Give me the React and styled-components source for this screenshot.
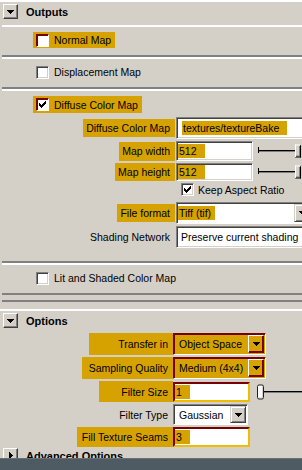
import React from 'react';
import styled, { createGlobalStyle } from 'styled-components';

const C = {
  bg: '#d4d0c8',
  white: '#ffffff',
  shadow: '#808080',
  dark: '#404040',
  hl: '#d6a200',
  maroon: '#780000',
  gold: '#f0bc00',
  task: '#4f5b63',
};

const Global = createGlobalStyle`
  html, body { margin: 0; padding: 0; background: ${C.bg}; overflow: hidden; }
  body { font-family: "Liberation Sans", Arial, sans-serif; font-size: 10.5px; color: #000; }
`;

const Screen = styled.div`
  width: 302px;
  height: 470px;
  display: flex;
  flex-direction: column;
  overflow: hidden;
  background: ${C.bg};
`;

const Viewport = styled.div`
  height: 458px;
  flex-shrink: 0;
  overflow: hidden;
  display: flex;
  flex-direction: column;
`;

const Taskbar = styled.div`
  height: 12px;
  flex-shrink: 0;
  box-sizing: border-box;
  background: ${C.task};
  border-top: 1px solid #66727a;
`;

const Section = styled.section`
  flex-shrink: 0;
  margin-top: ${p => p.$mt || 0}px;
  border-top: ${p => (p.$top ? `2px solid ${C.white}` : 'none')};
`;

const Header = styled.div`
  height: ${p => p.$h}px;
  display: flex;
  align-items: center;
  gap: 8px;
  padding-left: 3px;
`;

const Toggle = styled.span`
  width: 15px;
  height: 15px;
  box-sizing: border-box;
  display: inline-flex;
  align-items: center;
  justify-content: center;
  background: ${C.bg};
  border: 1px solid;
  border-color: ${C.white} ${C.dark} ${C.dark} ${C.white};
  box-shadow: inset -1px -1px 0 ${C.shadow};
`;

const Title = styled.span`
  font-weight: bold;
  font-size: 11px;
  white-space: nowrap;
`;

const Body = styled.div`
  padding-top: ${p => p.$pt}px;
  ${p =>
    p.$framed &&
    `
    margin-left: 2px;
    padding-bottom: 5px;
    border-bottom: 2px solid ${C.shadow};
  `}
`;

const Frame = styled.div`
  border-top: 2px solid ${C.white};
  border-bottom: 2px solid ${C.shadow};
`;

const CheckFrame = styled(Frame)`
  height: 26px;
  padding: 0 0 2px 31px;
  display: flex;
  align-items: center;
`;

const DiffuseFrame = styled(Frame)`
  padding: 5px 0 13px;
  display: flex;
  flex-direction: column;
`;

const CheckLine = styled.div`
  padding-left: 31px;
  display: flex;
`;

const CheckItem = styled.label`
  display: inline-flex;
  align-items: center;
  gap: 5px;
  height: ${p => p.$h || 16}px;
  padding: 0 4px 0 3px;
  background: ${p => (p.$hl ? C.hl : 'transparent')};
  white-space: nowrap;
`;

const Box = styled.span`
  width: 13px;
  height: 13px;
  flex-shrink: 0;
  box-sizing: border-box;
  display: inline-flex;
  align-items: center;
  justify-content: center;
  background: ${C.white};
  border: 1px solid;
  border-color: ${p =>
    p.$hl
      ? `${C.maroon} ${C.white} ${C.white} ${C.maroon}`
      : `${C.shadow} ${C.white} ${C.white} ${C.shadow}`};
  box-shadow: inset 1px 1px 0 ${p => (p.$hl ? C.maroon : C.dark)},
    inset -1px -1px 0 ${p => (p.$hl ? C.white : C.bg)};
`;

const CHECK = [
  [[6, 1]],
  [[5, 2]],
  [[0, 1], [4, 3]],
  [[0, 2], [3, 3]],
  [[0, 5]],
  [[1, 3]],
  [[2, 1]],
];

const Checkbox = ({ hl, checked }) => (
  <Box $hl={hl}>
    {checked && (
      <svg width="7" height="7" viewBox="0 0 7 7" shapeRendering="crispEdges">
        {CHECK.flatMap((segs, y) =>
          segs.map(([x, w]) => <rect key={`${y}-${x}`} x={x} y={y} width={w} height={1} fill="#000" />)
        )}
      </svg>
    )}
  </Box>
);

const Arrow = ({ dir = 'down' }) =>
  dir === 'down' ? (
    <svg width="7" height="4" viewBox="0 0 7 4" shapeRendering="crispEdges">
      <path d="M0 0h7v1h-1v1h-1v1h-1v1h-1v-1h-1v-1h-1v-1h-1z" fill="#000" />
    </svg>
  ) : (
    <svg width="4" height="7" viewBox="0 0 4 7" shapeRendering="crispEdges">
      <path d="M0 0v7h1v-1h1v-1h1v-1h1v-1h-1v-1h-1v-1h-1v-1z" fill="#000" />
    </svg>
  );

const Form = styled.div`
  --label-col: ${p => p.$col}px;
  --col-gap: ${p => p.$gap}px;
  display: flex;
  flex-direction: column;
  gap: 2px;
  margin-top: ${p => p.$mt || 0}px;
`;

const FormRow = styled.div`
  display: grid;
  grid-template-columns: var(--label-col) minmax(0, 1fr);
  column-gap: var(--col-gap);
  height: ${p => p.$h}px;
  align-items: ${p => (p.$top ? 'start' : 'center')};
`;

const Label = styled.span`
  justify-self: end;
  display: flex;
  align-items: center;
  justify-content: flex-end;
  box-sizing: border-box;
  height: ${p => p.$h || 18}px;
  ${p => (p.$w ? `width: ${p.$w}px;` : '')}
  padding: 0 5px 0 3px;
  background: ${p => (p.$hl ? C.hl : 'transparent')};
  white-space: nowrap;
`;

const Cell = styled.div`
  display: flex;
  align-items: center;
  height: ${p => (p.$h ? `${p.$h}px` : '100%')};
  padding-left: ${p => p.$pl || 0}px;
  gap: ${p => p.$gap || 0}px;
  white-space: nowrap;
`;

const TextField = styled.div`
  width: ${p => p.$w}px;
  height: ${p => p.$h}px;
  flex-shrink: 0;
  box-sizing: border-box;
  display: flex;
  align-items: center;
  padding-left: ${p => p.$pl || 0}px;
  background: ${C.white};
  overflow: hidden;
  white-space: nowrap;
  border: ${p => (p.$hl ? 2 : 1)}px solid;
  border-color: ${p =>
    p.$hl
      ? `${C.maroon} ${C.gold} ${C.gold} ${C.maroon}`
      : `${C.shadow} ${C.white} ${C.white} ${C.shadow}`};
  box-shadow: ${p => (p.$hl ? 'none' : `inset 1px 1px 0 ${C.dark}, inset -1px -1px 0 ${C.bg}`)};
`;

const Sel = styled.span`
  display: inline-flex;
  align-items: center;
  height: 14px;
  padding: 0 ${p => p.$pr ?? 8}px 0 1px;
  background: ${C.hl};
`;

const OptionMenu = styled.div`
  width: ${p => p.$w}px;
  height: ${p => p.$h || 22}px;
  flex-shrink: 0;
  box-sizing: border-box;
  display: flex;
  padding: 1px;
  border: 1px solid;
  border-color: ${p =>
    p.$hl
      ? `${C.maroon} ${C.white} ${C.white} ${C.maroon}`
      : `${C.shadow} ${C.white} ${C.white} ${C.shadow}`};
  box-shadow: inset 1px 1px 0 ${p => (p.$hl ? C.maroon : C.dark)};
  background: ${p => (p.$hl ? C.hl : C.white)};
`;

const MenuValue = styled.div`
  flex: 1;
  min-width: 0;
  display: flex;
  align-items: center;
  padding-left: ${p => p.$pl || 0}px;
  white-space: nowrap;
  overflow: hidden;
`;

const MenuButton = styled.div`
  width: 16px;
  flex-shrink: 0;
  box-sizing: border-box;
  display: flex;
  align-items: center;
  justify-content: center;
  border: 1px solid;
  border-color: ${p =>
    p.$hl
      ? `${C.white} ${C.maroon} ${C.maroon} ${C.white}`
      : `${C.bg} ${C.dark} ${C.dark} ${C.bg}`};
  box-shadow: ${p =>
    p.$hl ? `inset -1px -1px 0 ${C.maroon}` : `inset 1px 1px 0 ${C.white}, inset -1px -1px 0 ${C.shadow}`};
  background: ${p => (p.$hl ? C.hl : C.bg)};
`;

const Slider = styled.div`
  position: relative;
  flex: 1;
  min-width: 0;
  align-self: stretch;
  margin-left: ${p => p.$ml}px;
`;

const Groove = styled.div`
  position: absolute;
  left: ${p => p.$l || 0}px;
  right: ${p => p.$r || 0}px;
  top: calc(50% - 1px);
  height: 1px;
  background: #000;
  border-bottom: 1px solid ${C.shadow};
  &::before {
    content: '';
    display: ${p => (p.$tick ? 'block' : 'none')};
    position: absolute;
    left: 0;
    top: -3px;
    width: 1px;
    height: 6px;
    background: #000;
  }
`;

const Thumb = styled.div`
  position: absolute;
  top: 50%;
  transform: translateY(-50%);
  left: ${p => p.$x}px;
  width: ${p => p.$w}px;
  height: ${p => p.$h}px;
  box-sizing: border-box;
  background: ${p => (p.$round ? C.white : C.bg)};
  border: 1px solid;
  border-color: ${p => (p.$round ? '#202020' : `${C.white} #000 #000 ${C.white}`)};
  border-radius: ${p => (p.$round ? 2 : 0)}px;
  box-shadow: ${p => (p.$round ? `inset -1px -1px 0 ${C.bg}` : `inset -1px -1px 0 ${C.shadow}`)};
`;

export default function App() {
  return (
    <>
      <Global />
      <Screen>
        <Viewport>
          <Section $top>
            <Header $h={19}>
              <Toggle>
                <Arrow />
              </Toggle>
              <Title>Outputs</Title>
            </Header>
            <Body $pt={4} $framed>
              <CheckFrame>
                <CheckItem $hl>
                  <Checkbox hl />
                  <span>Normal Map</span>
                </CheckItem>
              </CheckFrame>
              <CheckFrame>
                <CheckItem>
                  <Checkbox />
                  <span>Displacement Map</span>
                </CheckItem>
              </CheckFrame>
              <DiffuseFrame>
                <CheckLine>
                  <CheckItem $hl $h={17}>
                    <Checkbox hl checked />
                    <span>Diffuse Color Map</span>
                  </CheckItem>
                </CheckLine>
                <Form $col={173} $gap={1} $mt={4}>
                  <FormRow $h={22}>
                    <Label $hl>Diffuse Color Map</Label>
                    <Cell>
                      <TextField $w={140} $h={22} $pl={5}>
                        <Sel>textures/textureBake</Sel>
                      </TextField>
                    </Cell>
                  </FormRow>
                  <FormRow $h={20}>
                    <Label $hl $h={19}>Map width</Label>
                    <Cell>
                      <TextField $w={77} $h={20} $pl={1}>
                        <Sel>512</Sel>
                      </TextField>
                      <Slider $ml={5}>
                        <Groove $tick $r={4} />
                        <Thumb $x={37} $w={6} $h={13} />
                      </Slider>
                    </Cell>
                  </FormRow>
                  <FormRow $h={18}>
                    <Label $hl>Map height</Label>
                    <Cell>
                      <TextField $w={77} $h={18} $pl={1}>
                        <Sel>512</Sel>
                      </TextField>
                      <Slider $ml={5}>
                        <Groove $tick $r={4} />
                        <Thumb $x={37} $w={6} $h={13} />
                      </Slider>
                    </Cell>
                  </FormRow>
                  <FormRow $h={17} $top>
                    <span />
                    <Cell $pl={5} $gap={4} $h={13}>
                      <Checkbox checked />
                      <span>Keep Aspect Ratio</span>
                    </Cell>
                  </FormRow>
                  <FormRow $h={22}>
                    <Label $hl>File format</Label>
                    <Cell>
                      <OptionMenu $w={136}>
                        <MenuValue>
                          <Sel $pr={4}>Tiff (tif)</Sel>
                        </MenuValue>
                        <MenuButton>
                          <Arrow />
                        </MenuButton>
                      </OptionMenu>
                    </Cell>
                  </FormRow>
                  <FormRow $h={22}>
                    <Label>Shading Network</Label>
                    <Cell>
                      <TextField $w={140} $h={22} $pl={4}>
                        Preserve current shading
                      </TextField>
                    </Cell>
                  </FormRow>
                </Form>
              </DiffuseFrame>
              <CheckFrame>
                <CheckItem>
                  <Checkbox />
                  <span>Lit and Shaded Color Map</span>
                </CheckItem>
              </CheckFrame>
            </Body>
          </Section>

          <Section $top $mt={7}>
            <Header $h={19}>
              <Toggle>
                <Arrow />
              </Toggle>
              <Title>Options</Title>
            </Header>
            <Body $pt={3}>
              <Form $col={173} $gap={0}>
                <FormRow $h={22}>
                  <Label $hl $h={22} $w={84}>Transfer in</Label>
                  <Cell>
                    <OptionMenu $hl $w={93}>
                      <MenuValue $pl={4}>Object Space</MenuValue>
                      <MenuButton $hl>
                        <Arrow />
                      </MenuButton>
                    </OptionMenu>
                  </Cell>
                </FormRow>
                <FormRow $h={22}>
                  <Label $hl $h={22} $w={91}>Sampling Quality</Label>
                  <Cell>
                    <OptionMenu $hl $w={93}>
                      <MenuValue $pl={4}>Medium (4x4)</MenuValue>
                      <MenuButton $hl>
                        <Arrow />
                      </MenuButton>
                    </OptionMenu>
                  </Cell>
                </FormRow>
                <FormRow $h={21}>
                  <Label $hl $h={21} $w={74}>Filter Size</Label>
                  <Cell>
                    <TextField $hl $w={77} $h={20}>
                      <Sel>1</Sel>
                    </TextField>
                    <Slider $ml={7}>
                      <Groove $l={6} />
                      <Thumb $round $x={0} $w={7} $h={15} />
                    </Slider>
                  </Cell>
                </FormRow>
                <FormRow $h={21}>
                  <Label>Filter Type</Label>
                  <Cell>
                    <OptionMenu $w={75} $h={21}>
                      <MenuValue $pl={4}>Gaussian</MenuValue>
                      <MenuButton>
                        <Arrow />
                      </MenuButton>
                    </OptionMenu>
                  </Cell>
                </FormRow>
                <FormRow $h={20}>
                  <Label $hl $h={20} $w={96}>Fill Texture Seams</Label>
                  <Cell>
                    <TextField $hl $w={77} $h={20}>
                      <Sel>3</Sel>
                    </TextField>
                  </Cell>
                </FormRow>
              </Form>
            </Body>
          </Section>

          <Section>
            <Header $h={17}>
              <Toggle>
                <Arrow dir="right" />
              </Toggle>
              <Title>Advanced Options</Title>
            </Header>
          </Section>
        </Viewport>
        <Taskbar />
      </Screen>
    </>
  );
}
